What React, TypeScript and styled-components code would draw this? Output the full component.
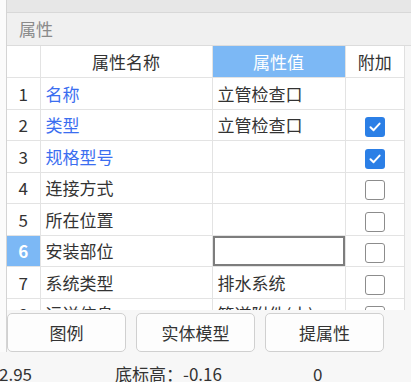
import styled, { createGlobalStyle } from "styled-components";

const GlobalStyle = createGlobalStyle`
  html, body {
    margin: 0;
    padding: 0;
    background: #f7f7f7;
  }
  body {
    font-family: "Noto Sans CJK SC", "Noto Sans", sans-serif;
  }
`;

const Screen = styled.div`
  width: 411px;
  height: 382px;
  overflow: hidden;
  display: flex;
  flex-direction: column;
  background: #f7f7f7;
`;

const Workspace = styled.div`
  display: flex;
  height: 352px;
  background: #fbfbfb;
`;

const Gutter = styled.div`
  width: 6px;
  flex: none;
  background: #fbfbfb;
  border-right: 1px solid #d4d4d4;
`;

const Panel = styled.div`
  flex: 1;
  display: flex;
  flex-direction: column;
  background: #f7f7f7;
`;

const TopStrip = styled.div`
  height: 12px;
  background: #e7e7e7;
  border-bottom: 1px solid #d8d8d8;
`;

const SectionTitle = styled.div`
  height: 32px;
  line-height: 32px;
  padding-left: 12px;
  font-size: 17px;
  color: #8a8a8a;
  background: #f0f0f0;
  border-bottom: 1px solid #dcdcdc;
`;

const TableWrap = styled.div`
  height: 264px;
  overflow: hidden;
  width: 397px;
  background: #fff;
  border-right: 1px solid #e0e0e0;
`;

const Grid = styled.table`
  border-collapse: collapse;
  table-layout: fixed;
  width: 397px;
  font-size: 17px;
  color: #333;
`;

const HeadCell = styled.th<{ $active?: boolean }>`
  height: 31px;
  padding: 0;
  font-weight: normal;
  text-align: center;
  border: 1px solid #e3e3e3;
  border-top: none;
  background: ${({ $active }) => ($active ? "#7cb8f5" : "#fff")};
  color: ${({ $active }) => ($active ? "#fff" : "#333")};
`;

const IndexCell = styled.td<{ $active?: boolean }>`
  height: 30.5px;
  padding: 0;
  text-align: center;
  border: 1px solid #e3e3e3;
  border-left: none;
  background: ${({ $active }) => ($active ? "#7cb8f5" : "#fff")};
  color: ${({ $active }) => ($active ? "#fff" : "#333")};
  font-weight: ${({ $active }) => ($active ? "bold" : "normal")};
`;

const NameCell = styled.td<{ $link?: boolean }>`
  padding: 0 0 0 5px;
  border: 1px solid #e3e3e3;
  white-space: nowrap;
  overflow: hidden;
  color: ${({ $link }) => ($link ? "#3b6ef0" : "#333")};
`;

const ValueCell = styled.td<{ $editing?: boolean }>`
  padding: 0 0 0 5px;
  border: 1px solid #e3e3e3;
  white-space: nowrap;
  overflow: hidden;
  box-shadow: ${({ $editing }) => ($editing ? "inset 0 0 0 2px #7d7d7d" : "none")};
`;

const ExtraCell = styled.td`
  padding: 0;
  text-align: center;
  border: 1px solid #e3e3e3;
  border-right: none;
`;

const Check = styled.span<{ $on?: boolean }>`
  display: inline-flex;
  align-items: center;
  justify-content: center;
  vertical-align: middle;
  box-sizing: border-box;
  width: 20px;
  height: 20px;
  border-radius: 3px;
  border: ${({ $on }) => ($on ? "none" : "1.5px solid #8c8c8c")};
  background: ${({ $on }) => ($on ? "#2b7fe6" : "#fff")};
`;

const ButtonRow = styled.div`
  display: flex;
  gap: 10px;
  padding-top: 3px;
  height: 39px;
  background: #f7f7f7;
`;

const Button = styled.button`
  width: 119px;
  height: 39px;
  box-sizing: border-box;
  border: 1px solid #d0d0d0;
  border-radius: 5px;
  background: #fdfdfd;
  font-family: inherit;
  font-size: 17px;
  color: #333;
  padding: 0;
`;

const StatusBar = styled.div`
  height: 30px;
  position: relative;
  font-size: 17px;
  color: #333;
  line-height: 1;
  padding-top: 13px;
  box-sizing: border-box;
  white-space: nowrap;
`;

const StatusItem = styled.span<{ $x: number }>`
  position: absolute;
  left: ${({ $x }) => $x}px;
  top: 13px;
`;

type Row = {
  name: string;
  value: string;
  link?: boolean;
  checked?: boolean;
};

const rows: Row[] = [
  { name: "名称", value: "立管检查口", link: true },
  { name: "类型", value: "立管检查口", link: true, checked: true },
  { name: "规格型号", value: "", link: true, checked: true },
  { name: "连接方式", value: "" },
  { name: "所在位置", value: "" },
  { name: "安装部位", value: "" },
  { name: "系统类型", value: "排水系统" },
  { name: "运送信息", value: "管道附件(小)" },
];

const Tick = () => (
  <svg width="14" height="14" viewBox="0 0 14 14">
    <path
      d="M2.5 7.2 L5.6 10.2 L11.6 3.6"
      fill="none"
      stroke="#fff"
      strokeWidth="2"
      strokeLinecap="round"
      strokeLinejoin="round"
    />
  </svg>
);

export default function App() {
  return (
    <>
      <GlobalStyle />
      <Screen>
        <Workspace>
          <Gutter />
          <Panel>
            <TopStrip />
            <SectionTitle>属性</SectionTitle>
            <TableWrap>
              <Grid>
                <colgroup>
                  <col style={{ width: 33 }} />
                  <col style={{ width: 172 }} />
                  <col style={{ width: 133 }} />
                  <col style={{ width: 59 }} />
                </colgroup>
                <thead>
                  <tr>
                    <HeadCell style={{ borderLeft: "none" }} />
                    <HeadCell>属性名称</HeadCell>
                    <HeadCell $active>属性值</HeadCell>
                    <HeadCell style={{ borderRight: "none" }}>附加</HeadCell>
                  </tr>
                </thead>
                <tbody>
                  {rows.map((row, i) => (
                    <tr key={i}>
                      <IndexCell $active={i === 5}>{i + 1}</IndexCell>
                      <NameCell $link={row.link}>{row.name}</NameCell>
                      <ValueCell $editing={i === 5}>{row.value}</ValueCell>
                      <ExtraCell>
                        {i > 0 && (
                          <Check $on={row.checked}>{row.checked && <Tick />}</Check>
                        )}
                      </ExtraCell>
                    </tr>
                  ))}
                </tbody>
              </Grid>
            </TableWrap>
            <ButtonRow>
              <Button>图例</Button>
              <Button>实体模型</Button>
              <Button>提属性</Button>
            </ButtonRow>
          </Panel>
        </Workspace>
        <StatusBar>
          <StatusItem $x={-1}>2.95</StatusItem>
          <StatusItem $x={115}>底标高：-0.16</StatusItem>
          <StatusItem $x={313}>0</StatusItem>
        </StatusBar>
      </Screen>
    </>
  );
}
